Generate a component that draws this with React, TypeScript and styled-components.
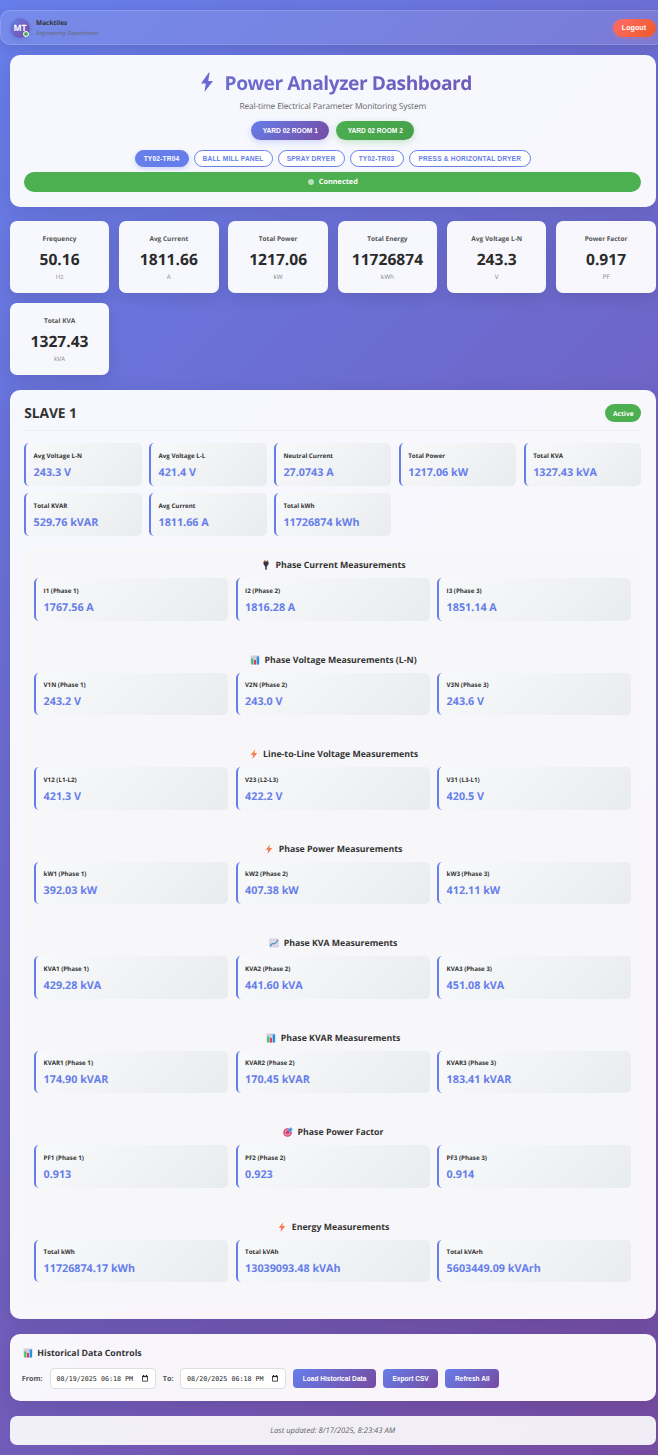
import React from 'react';
import styled, { createGlobalStyle, css } from 'styled-components';

const Global = createGlobalStyle`
  *, *::before, *::after { box-sizing: border-box; }
  body {
    margin: 0;
    overflow: hidden;
    font-family: 'Open Sans', 'Noto Sans', sans-serif;
    color: #333;
    text-rendering: geometricPrecision;
  }
  button { font-family: 'Liberation Sans', Arial, sans-serif; padding: 0; border: 0; }
`;

const brand = 'linear-gradient(135deg, #667eea 0%, #764ba2 100%)';

const Page = styled.div`
  width: 658px;
  height: 1455px;
  overflow: hidden;
  padding-top: 10px;
  background: ${brand};
`;

const TopBar = styled.header`
  display: flex;
  align-items: center;
  width: 664px;
  height: 35px;
  padding: 0 7.5px 0 9px;
  border: 1px solid rgba(255, 255, 255, 0.16);
  border-radius: 10px;
  background: rgba(255, 255, 255, 0.1);
  box-shadow: 0 3px 10px rgba(0, 0, 0, 0.1);
`;

const Avatar = styled.div`
  position: relative;
  display: grid;
  place-items: center;
  width: 20px;
  height: 20px;
  border-radius: 50%;
  background: ${brand};
  color: #fff;
  font-size: 8.6px;
  font-weight: 700;
  box-shadow: 0 2px 5px rgba(0, 0, 0, 0.1);
`;

const Presence = styled.i`
  position: absolute;
  right: 1px;
  bottom: 1px;
  width: 6px;
  height: 6px;
  border: 1px solid #fff;
  border-radius: 50%;
  background: #4caf50;
`;

const User = styled.div`
  flex: 1;
  margin-left: 6px;
`;

const UserName = styled.div`
  height: 9px;
  font-size: 6.5px;
  line-height: 9px;
  font-weight: 700;
`;

const UserRole = styled.div`
  height: 10px;
  font-size: 5.8px;
  line-height: 12px;
  font-style: italic;
  color: #666;
`;

const Logout = styled.button`
  width: 43px;
  height: 18px;
  border-radius: 9px;
  background: linear-gradient(135deg, #ff6b6b, #ee5a24);
  color: #fff;
  font-size: 7px;
  font-weight: 700;
  letter-spacing: 0.1px;
  box-shadow: 0 2px 5px rgba(255, 107, 107, 0.3);
`;

const Content = styled.main`
  display: flex;
  flex-direction: column;
  gap: 14.5px;
  width: 646px;
  margin: 9.5px 0 0 9.8px;
`;

const Card = styled.section`
  border-radius: 10px;
  background: rgba(255, 255, 255, 0.95);
  box-shadow: 0 5px 20px rgba(0, 0, 0, 0.1);
`;

const Hero = styled(Card)`
  display: flex;
  flex-direction: column;
  align-items: center;
  height: 152px;
  padding: 13px 14.5px 14px;
`;

const Title = styled.h1`
  display: flex;
  align-items: center;
  gap: 10px;
  margin: 0;
  height: 29px;
  padding-left: 5px;
  font-size: 19.2px;
  line-height: 29px;
  font-weight: 700;
  letter-spacing: -0.46px;
`;

const TitleText = styled.span`
  background: linear-gradient(90deg, #6c6bd0 0%, #6f5bb9 100%);
  -webkit-background-clip: text;
  background-clip: text;
  color: transparent;
`;

const Subtitle = styled.p`
  margin: 2px 0 0;
  height: 16px;
  font-size: 8.4px;
  line-height: 16px;
  letter-spacing: -0.13px;
  color: #666;
`;

const ButtonRow = styled.div<{ $gap: number; $top: number }>`
  display: flex;
  justify-content: center;
  gap: ${(p) => p.$gap}px;
  margin-top: ${(p) => p.$top}px;
`;

const RoomButton = styled.button<{ $green?: boolean }>`
  width: 78px;
  height: 19px;
  border-radius: 10px;
  color: #fff;
  font-size: 6.6px;
  font-weight: 700;
  background: ${(p) => (p.$green ? 'linear-gradient(135deg, #4caf50, #45a049)' : brand)};
  box-shadow: 0 2px 7px ${(p) => (p.$green ? 'rgba(76,175,80,.3)' : 'rgba(102,126,234,.3)')};
`;

const DeviceButton = styled.button<{ $w: number; $on?: boolean }>`
  width: ${(p) => p.$w}px;
  height: 17px;
  border: 1px solid #667eea;
  border-radius: 9px;
  background: ${(p) => (p.$on ? '#667eea' : '#fff')};
  color: ${(p) => (p.$on ? '#fff' : '#667eea')};
  font-size: 6.6px;
  font-weight: 700;
  letter-spacing: 0.19px;
  white-space: nowrap;
  ${(p) => p.$on && css`box-shadow: 0 2px 5px rgba(102, 126, 234, 0.3);`}
`;

const Connection = styled.div`
  display: flex;
  align-items: center;
  justify-content: center;
  gap: 5px;
  width: 100%;
  height: 20px;
  margin-top: 5px;
  border-radius: 10px;
  background: #4caf50;
  color: #fff;
  font-size: 7.3px;
  font-weight: 700;
`;

const Dot = styled.i`
  width: 6px;
  height: 6px;
  border-radius: 50%;
  background: rgba(255, 255, 255, 0.6);
`;

const Summary = styled.div`
  display: grid;
  grid-template-columns: repeat(6, 1fr);
  gap: 9.8px;
`;

const SummaryCard = styled.div`
  display: flex;
  flex-direction: column;
  align-items: center;
  height: 72.2px;
  padding-top: 12px;
  border-radius: 7px;
  background: rgba(255, 255, 255, 0.95);
  box-shadow: 0 5px 15px rgba(0, 0, 0, 0.1);
`;

const SummaryLabel = styled.span`
  font-size: 6.5px;
  line-height: 11px;
  font-weight: 700;
  color: #555;
`;

const SummaryValue = styled.strong`
  margin-top: 3.8px;
  font-size: 15.6px;
  line-height: 23px;
  font-weight: 700;
  color: #2b2b2b;
`;

const SummaryUnit = styled.span`
  margin-top: 1.2px;
  font-size: 6.4px;
  line-height: 10px;
  color: #888;
`;

const Slave = styled(Card)`
  height: 929.5px;
  padding: 14px 14.5px;
`;

const SlaveHead = styled.div`
  display: flex;
  align-items: center;
  justify-content: space-between;
  height: 27.5px;
  padding-bottom: 7px;
  border-bottom: 1px solid #f0f0f2;
  margin-bottom: 12.2px;
`;

const SlaveTitle = styled.h2`
  margin: 1px 0 0;
  font-size: 13.8px;
  line-height: 20px;
  font-weight: 700;
  letter-spacing: -0.1px;
`;

const Badge = styled.span`
  display: grid;
  place-items: center;
  width: 36px;
  height: 18px;
  border-radius: 9px;
  background: #4caf50;
  color: #fff;
  font-size: 6.6px;
  font-weight: 700;
`;

const Grid = styled.div<{ $cols: number }>`
  display: grid;
  grid-template-columns: repeat(${(p) => p.$cols}, 1fr);
  gap: 7.5px;
`;

const Cell = styled.div`
  height: 42.6px;
  padding: 7.8px 0 0 7.3px;
  border-left: 2px solid #667eea;
  border-radius: 5px;
  background: linear-gradient(135deg, #f8f9fa 0%, #e9ecef 100%);
  white-space: nowrap;
`;

const CellLabel = styled.div`
  font-size: 6.2px;
  line-height: 10px;
  font-weight: 700;
`;

const CellValue = styled.div`
  margin-top: 3.8px;
  font-size: 10.75px;
  line-height: 16px;
  font-weight: 700;
  color: #667eea;
`;

const Phases = styled.div`
  height: 756px;
  margin-top: 12px;
  padding: 10px;
  border-radius: 7px;
  background: #f7f7f9;
`;

const Phase = styled.section`
  height: 94.5px;
`;

const PhaseTitle = styled.h3`
  display: flex;
  align-items: center;
  justify-content: center;
  gap: 4.5px;
  margin: 0;
  height: 20px;
  padding: 0 0 5.2px 1px;
  font-size: 8.75px;
  font-weight: 700;
`;

const History = styled(Card)`
  height: 67.5px;
  padding: 12px 12px;
`;

const HistoryTitle = styled.h3`
  display: flex;
  align-items: center;
  gap: 4.5px;
  margin: 0 0 9px;
  padding-left: 1px;
  height: 14px;
  font-size: 8.75px;
  font-weight: 700;
`;

const Controls = styled.div`
  display: flex;
  align-items: center;
  height: 20px;
`;

const FieldLabel = styled.label<{ $w: number }>`
  width: ${(p) => p.$w}px;
  font-size: 7.2px;
  font-weight: 700;
  color: #555;
`;

const DateField = styled.div`
  display: flex;
  align-items: center;
  justify-content: space-between;
  width: 106px;
  height: 21px;
  margin-right: 7px;
  padding: 0 7px 0 5.8px;
  border: 1px solid #ddd;
  border-radius: 4px;
  background: #fff;
  color: #222;
  font-family: 'DejaVu Sans Mono', monospace;
  font-size: 6.7px;
  white-space: pre;
`;

const Action = styled.button<{ $w: number }>`
  width: ${(p) => p.$w}px;
  height: 19px;
  margin-right: 7.3px;
  border-radius: 4px;
  background: ${brand};
  color: #fff;
  font-size: 6.6px;
  font-weight: 700;
`;

const Footer = styled.footer`
  display: grid;
  place-items: center;
  height: 29.5px;
  padding-top: 1px;
  border-radius: 7px;
  background: rgba(255, 255, 255, 0.9);
  color: #666;
  font-size: 7.7px;
  font-style: italic;
`;

type IconKind = 'plug' | 'bars' | 'bolt' | 'trend' | 'target';

function Icon({ kind }: { kind: IconKind }) {
  const p = { width: 10, height: 10, viewBox: '0 0 20 20' };
  if (kind === 'plug')
    return (
      <svg {...p}>
        <path d="M7.5 0v4M12.5 0v4" stroke="#d98b55" strokeWidth="2.4" />
        <path d="M5 3h10v5l-3 5H8L5 8z" fill="#39304a" />
        <path d="M10 10v9.5" stroke="#39304a" strokeWidth="3" />
      </svg>
    );
  if (kind === 'bars')
    return (
      <svg {...p}>
        <rect x="1" y="1" width="18" height="18" rx="2" fill="#d3cbdc" />
        <rect x="2.5" y="7" width="4" height="12" fill="#36c85a" />
        <rect x="8" y="10" width="4" height="9" fill="#e5366e" />
        <rect x="13.5" y="3" width="4.5" height="16" fill="#2196e8" />
      </svg>
    );
  if (kind === 'trend')
    return (
      <svg {...p}>
        <rect x="0.5" y="1" width="19" height="18" rx="2" fill="#d5cee0" />
        <path d="M1 7h18M1 13h18M7 1v18M13 1v18" stroke="#eeeaf3" />
        <path d="M2 16l5-5 4 1 7-8" fill="none" stroke="#3288d0" strokeWidth="2.2" />
      </svg>
    );
  if (kind === 'target')
    return (
      <svg {...p}>
        <circle cx="9" cy="11" r="8.5" fill="#d94372" />
        <circle cx="9" cy="11" r="5.8" fill="#f0a9c0" />
        <circle cx="9" cy="11" r="4.2" fill="#d94372" />
        <path d="M9 11l6-6" stroke="#416fae" strokeWidth="2" />
        <path d="M11 5l5-5 1 3 3 1-5 5h-4z" fill="#2fa3e6" />
      </svg>
    );
  return (
    <svg {...p}>
      <defs>
        <linearGradient id="boltFill" x1="0" y1="0" x2="0" y2="1">
          <stop offset="0" stopColor="#f9a13a" />
          <stop offset="1" stopColor="#f2525a" />
        </linearGradient>
      </defs>
      <path d="M12.5 .5L3.5 11.5h5L7 19.5 16.5 8H11l1.5-7.5z" fill="url(#boltFill)" />
    </svg>
  );
}

const summary = [
  ['Frequency', '50.16', 'Hz'],
  ['Avg Current', '1811.66', 'A'],
  ['Total Power', '1217.06', 'kW'],
  ['Total Energy', '11726874', 'kWh'],
  ['Avg Voltage L-N', '243.3', 'V'],
  ['Power Factor', '0.917', 'PF'],
  ['Total KVA', '1327.43', 'kVA'],
];

const params: [string, string][] = [
  ['Avg Voltage L-N', '243.3 V'],
  ['Avg Voltage L-L', '421.4 V'],
  ['Neutral Current', '27.0743 A'],
  ['Total Power', '1217.06 kW'],
  ['Total KVA', '1327.43 kVA'],
  ['Total KVAR', '529.76 kVAR'],
  ['Avg Current', '1811.66 A'],
  ['Total kWh', '11726874 kWh'],
];

const phases: { icon: IconKind; title: string; cells: [string, string][] }[] = [
  { icon: 'plug', title: 'Phase Current Measurements', cells: [['I1 (Phase 1)', '1767.56 A'], ['I2 (Phase 2)', '1816.28 A'], ['I3 (Phase 3)', '1851.14 A']] },
  { icon: 'bars', title: 'Phase Voltage Measurements (L-N)', cells: [['V1N (Phase 1)', '243.2 V'], ['V2N (Phase 2)', '243.0 V'], ['V3N (Phase 3)', '243.6 V']] },
  { icon: 'bolt', title: 'Line-to-Line Voltage Measurements', cells: [['V12 (L1-L2)', '421.3 V'], ['V23 (L2-L3)', '422.2 V'], ['V31 (L3-L1)', '420.5 V']] },
  { icon: 'bolt', title: 'Phase Power Measurements', cells: [['kW1 (Phase 1)', '392.03 kW'], ['kW2 (Phase 2)', '407.38 kW'], ['kW3 (Phase 3)', '412.11 kW']] },
  { icon: 'trend', title: 'Phase KVA Measurements', cells: [['KVA1 (Phase 1)', '429.28 kVA'], ['KVA2 (Phase 2)', '441.60 kVA'], ['KVA3 (Phase 3)', '451.08 kVA']] },
  { icon: 'bars', title: 'Phase KVAR Measurements', cells: [['KVAR1 (Phase 1)', '174.90 kVAR'], ['KVAR2 (Phase 2)', '170.45 kVAR'], ['KVAR3 (Phase 3)', '183.41 kVAR']] },
  { icon: 'target', title: 'Phase Power Factor', cells: [['PF1 (Phase 1)', '0.913'], ['PF2 (Phase 2)', '0.923'], ['PF3 (Phase 3)', '0.914']] },
  { icon: 'bolt', title: 'Energy Measurements', cells: [['Total kWh', '11726874.17 kWh'], ['Total kVAh', '13039093.48 kVAh'], ['Total kVArh', '5603449.09 kVArh']] },
];

function Cells({ items, cols }: { items: [string, string][]; cols: number }) {
  return (
    <Grid $cols={cols}>
      {items.map(([label, value]) => (
        <Cell key={label}>
          <CellLabel>{label}</CellLabel>
          <CellValue>{value}</CellValue>
        </Cell>
      ))}
    </Grid>
  );
}

function DateInput({ value }: { value: string }) {
  return (
    <DateField>
      {value}
      <svg width="6" height="7" viewBox="0 0 6 7">
        <path d="M.5 1.2h5v5h-5z" fill="none" stroke="#222" strokeWidth=".8" />
        <path d="M.3 1.7h5.4M1.5 0v1.5M4.5 0v1.5" stroke="#222" />
      </svg>
    </DateField>
  );
}

export default function App() {
  return (
    <Page>
      <Global />
      <TopBar>
        <Avatar>
          MT
          <Presence />
        </Avatar>
        <User>
          <UserName>Macktiles</UserName>
          <UserRole>Engineering Department</UserRole>
        </User>
        <Logout>Logout</Logout>
      </TopBar>
      <Content>
        <Hero>
          <Title>
            <svg width="16" height="20" viewBox="0 0 16 20">
              <path d="M9.8 .5L2 11.5h4.8L5.5 20 14 9H9.2L10.6 .5z" fill="#6a6bd0" />
            </svg>
            <TitleText>Power Analyzer Dashboard</TitleText>
          </Title>
          <Subtitle>Real-time Electrical Parameter Monitoring System</Subtitle>
          <ButtonRow $gap={7} $top={6.5}>
            <RoomButton>YARD 02 ROOM 1</RoomButton>
            <RoomButton $green>YARD 02 ROOM 2</RoomButton>
          </ButtonRow>
          <ButtonRow $gap={5} $top={10}>
            <DeviceButton $w={54} $on>TY02-TR04</DeviceButton>
            <DeviceButton $w={79}>BALL MILL PANEL</DeviceButton>
            <DeviceButton $w={67}>SPRAY DRYER</DeviceButton>
            <DeviceButton $w={54}>TY02-TR03</DeviceButton>
            <DeviceButton $w={122.5}>PRESS &amp; HORIZONTAL DRYER</DeviceButton>
          </ButtonRow>
          <Connection>
            <Dot />
            Connected
          </Connection>
        </Hero>
        <Summary>
          {summary.map(([label, value, unit]) => (
            <SummaryCard key={label}>
              <SummaryLabel>{label}</SummaryLabel>
              <SummaryValue>{value}</SummaryValue>
              <SummaryUnit>{unit}</SummaryUnit>
            </SummaryCard>
          ))}
        </Summary>
        <Slave>
          <SlaveHead>
            <SlaveTitle>SLAVE 1</SlaveTitle>
            <Badge>Active</Badge>
          </SlaveHead>
          <Cells items={params} cols={5} />
          <Phases>
            {phases.map((phase) => (
              <Phase key={phase.title}>
                <PhaseTitle>
                  <Icon kind={phase.icon} />
                  {phase.title}
                </PhaseTitle>
                <Cells items={phase.cells} cols={3} />
              </Phase>
            ))}
          </Phases>
        </Slave>
        <History>
          <HistoryTitle>
            <Icon kind="bars" />
            Historical Data Controls
          </HistoryTitle>
          <Controls>
            <FieldLabel $w={28}>From:</FieldLabel>
            <DateInput value="08/19/2025 06:18 PM" />
            <FieldLabel $w={17.5}>To:</FieldLabel>
            <DateInput value="08/20/2025 06:18 PM" />
            <Action $w={82.5}>Load Historical Data</Action>
            <Action $w={55}>Export CSV</Action>
            <Action $w={54}>Refresh All</Action>
          </Controls>
        </History>
        <Footer>Last updated: 8/17/2025, 8:23:43 AM</Footer>
      </Content>
    </Page>
  );
}
